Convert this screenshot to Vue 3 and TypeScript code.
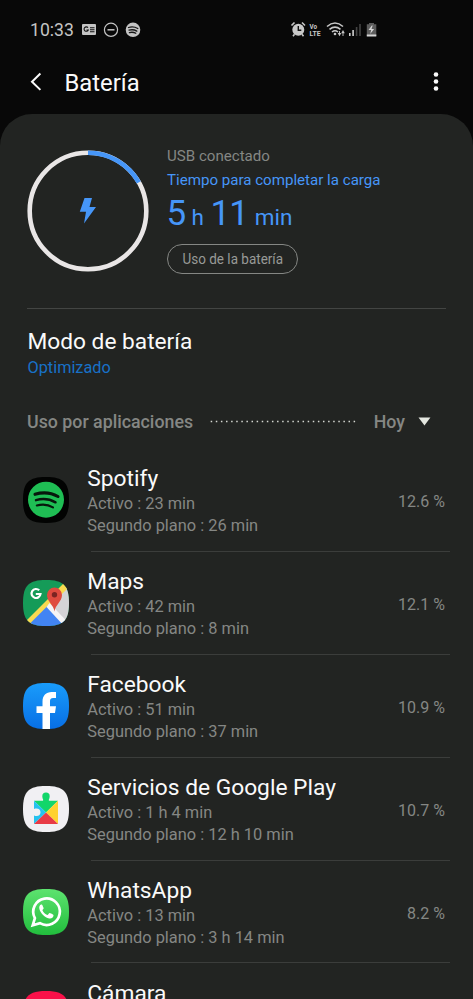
<script setup lang="ts">
interface AppUsage {
  id: string
  name: string
  active: string
  background: string
  percent: string
}

const squircle = 'M23 0C40.500 0 46 5.500 46 23S40.500 46 23 46 0 40.500 0 23 5.500 0 23 0Z'

const apps: AppUsage[] = [
  { id: 'spotify', name: 'Spotify', active: '23 min', background: '26 min', percent: '12.6 %' },
  { id: 'maps', name: 'Maps', active: '42 min', background: '8 min', percent: '12.1 %' },
  { id: 'facebook', name: 'Facebook', active: '51 min', background: '37 min', percent: '10.9 %' },
  { id: 'play', name: 'Servicios de Google Play', active: '1 h 4 min', background: '12 h 10 min', percent: '10.7 %' },
  { id: 'whatsapp', name: 'WhatsApp', active: '13 min', background: '3 h 14 min', percent: '8.2 %' },
  { id: 'camera', name: 'Cámara', active: '', background: '', percent: '' },
]
</script>

<template>
  <div class="screen">
    <header class="status">
      <span class="clock">10:33</span>
      <svg class="notifications" width="60" height="18" viewBox="0 0 60 18">
        <rect x="0" y="4" width="14" height="11" rx="1" fill="#c4c4c4" />
        <path d="M6 7.700A2.200 2.200 0 1 0 6.300 10H4.500M8 7.700h4.500M8 9.700h4.500M8 11.700h4.500" fill="none" stroke="#111" stroke-width="1.100" />
        <circle cx="29" cy="9.800" r="6.600" fill="none" stroke="#c4c4c4" stroke-width="1.200" />
        <path d="M25.500 9.800h7" stroke="#c4c4c4" stroke-width="1.500" />
        <circle cx="51" cy="9.800" r="7.300" fill="#c4c4c4" />
        <path d="M46.500 7.500q5-1.500 9.300 1M47 10.200q4.300-1.200 7.800.9M47.400 12.600q3.600-.9 6.400.7" fill="none" stroke="#161616" stroke-width="1.300" stroke-linecap="round" />
      </svg>
      <svg class="indicators" width="90" height="18" viewBox="0 0 90 18">
        <circle cx="8.300" cy="9.800" r="6" fill="#c8c8c8" />
        <path d="M1.500 5.500l3-3M15 5.500l-3-3M4.500 14.300l-1.500 2M12 14.300l1.500 2" stroke="#c8c8c8" stroke-width="1.600" />
        <path d="M8.300 6v4.200h3" fill="none" stroke="#111" stroke-width="1.400" />
        <text x="19.500" y="8.500" font-size="6.500" textLength="7.500" lengthAdjust="spacingAndGlyphs" class="lte">Vo</text>
        <text x="19.500" y="15.500" font-size="7.500" textLength="11" lengthAdjust="spacingAndGlyphs" class="lte">LTE</text>
        <path d="M37 6.500q8-7 16 0M39.500 9.300q5.500-4.500 11 0M42 12q3-2.500 6 0" fill="none" stroke="#c8c8c8" stroke-width="1.600" />
        <circle cx="45" cy="14" r="1.300" fill="#c8c8c8" />
        <path d="M47.700 13h3.600l-1.800 3.200zM51.200 13.200h3.600L53 10z" fill="#c8c8c8" />
        <path d="M49.500 11v3M53 12v4" stroke="#c8c8c8" stroke-width=".9" />
        <path d="M59 13h1.600v3H59zM62.300 10h1.600v6h-1.600z" fill="#d0d0d0" />
        <path d="M65.800 7h1.600v9h-1.600zM69.200 4h1.600v12h-1.600z" fill="#444" />
        <path d="M79 3h5v1.300h2.300V16h-9.500V4.300H79z" fill="#5c5c5c" />
        <path d="M76.800 14.500h9.500V16.500h-9.500zM81.800 5.500l-3.300 4.500h2.700l-1 4 3.900-5.100h-2.600l1.200-3.400z" fill="#d5d5d5" />
      </svg>
    </header>

    <nav class="toolbar">
      <svg class="back" width="14" height="20" viewBox="0 0 14 20"><path d="M11.400 1.500L3 9.700l8.400 8.200" fill="none" stroke="#fafafa" stroke-width="2" /></svg>
      <h1>Batería</h1>
      <svg class="more" width="6" height="20" viewBox="0 0 6 20" fill="#fafafa"><circle cx="3" cy="2.500" r="2.300" /><circle cx="3" cy="9.500" r="2.300" /><circle cx="3" cy="16.500" r="2.300" /></svg>
    </nav>

    <main class="panel">
      <section class="summary">
        <svg class="gauge" width="122" height="122" viewBox="0 0 122 122">
          <circle cx="61" cy="61" r="58.300" fill="none" stroke="#e9e6e6" stroke-width="4.600" />
          <path d="M61 2.700A58.300 58.300 0 0 1 111.800 32.400" fill="none" stroke="#4696f8" stroke-width="4.600" />
          <path d="M57.500 48h7.500l-2.500 9h6.500L57 73.500l2-11.700h-6.200z" fill="#4696f8" />
        </svg>
        <div class="charge">
          <p class="source">USB conectado</p>
          <p class="caption">Tiempo para completar la carga</p>
          <p class="time"><b>5</b><span class="h">h</span><b class="mins">11</b><span class="m">min</span></p>
          <button class="usage" type="button"><span>Uso de la batería</span></button>
        </div>
      </section>

      <section class="mode">
        <h2>Modo de batería</h2>
        <p>Optimizado</p>
      </section>

      <section class="filter">
        <h3>Uso por aplicaciones</h3>
        <svg class="dots" width="146" height="3" viewBox="0 0 146 3"><path d="M.7 1.500H146" stroke="#d5d8d2" stroke-width="1.500" stroke-dasharray="1.500 3.620" /></svg>
        <span class="period">Hoy</span>
        <svg class="caret" width="13" height="9" viewBox="0 0 13 9"><path d="M.5.5h12L6.500 8.500z" fill="#e3e6df" /></svg>
      </section>

      <ul class="apps">
        <li v-for="app in apps" :key="app.id">
          <svg class="icon" width="46" height="46" viewBox="0 0 46 46">
            <defs>
              <clipPath :id="'clip-' + app.id"><path :d="squircle" /></clipPath>
              <linearGradient :id="'fade-' + app.id" x1="0" y1="0" x2="0" y2="1">
                <stop offset="0" :stop-color="app.id === 'facebook' ? '#199cfb' : '#5de36f'" />
                <stop offset="1" :stop-color="app.id === 'facebook' ? '#086fe5' : '#22bd3d'" />
              </linearGradient>
            </defs>
            <g :clip-path="'url(#clip-' + app.id + ')'">
              <template v-if="app.id === 'spotify'">
                <path d="M0 0h46v46H0z" fill="#020302" />
                <circle cx="23" cy="22.700" r="18" fill="#1fbe54" />
                <g fill="none" stroke="#07180c" stroke-linecap="round">
                  <path d="M12 17.300q12.500-3.700 23 2.200" stroke-width="3.100" />
                  <path d="M13 23.100q10.500-3 19.500 2.200" stroke-width="2.500" />
                  <path d="M13.800 28.500q9-2.400 16.200 1.900" stroke-width="2.100" />
                </g>
              </template>
              <template v-else-if="app.id === 'maps'">
                <path d="M0 0h46v46H0z" fill="#159b58" />
                <path d="M46 4v42L24 24z" fill="#d4d3d6" />
                <path d="M0 44L42 2l5 4L5 48z" fill="#f9d950" />
                <path d="M2.500 48L25 25.500 44 44v4z" fill="#4284f3" />
                <path d="M23.500 27l3-4L45 42.500 41 46z" fill="#f5f4f5" />
                <path d="M31.500 31.500C30.800 25 24 21.500 24 15a7.500 7.500 0 0 1 15 0c0 6.500-6.800 10-7.500 16.500z" fill="#df4b3f" />
                <circle cx="31.500" cy="14.700" r="2.700" fill="#7b2422" />
                <path d="M16.200 10.300A4.500 4.500 0 1 0 17.500 14h-4.700" fill="none" stroke="#fff" stroke-width="2.200" />
              </template>
              <template v-else-if="app.id === 'facebook'">
                <path d="M0 0h46v46H0z" fill="url(#fade-facebook)" />
                <path d="M19.500 46V30h-6v-6.700h6v-4.600C19.500 12.500 23 9 28.700 9H33v6h-2.700c-2.800 0-3.300 1.200-3.300 3.500v4.800h6L32 30h-5v16z" fill="#fff" />
              </template>
              <template v-else-if="app.id === 'play'">
                <path d="M0 0h46v46H0z" fill="#f1f0f3" />
                <path d="M11 14.800h9c.8-1-.7-1.800-.7-4.500a3.700 3.700 0 0 1 7.400 0c0 2.700-1.500 3.500-.7 4.500h9L23 26.500z" fill="#12d66a" />
                <path d="M11 14.800L23 26.500 11 38v-8.500c4 1.500 6.500-.5 6.500-3.200S15 21.600 11 23z" fill="#25c2ef" />
                <path d="M35 14.800V38L23 26.500z" fill="#ffd22f" />
                <path d="M11 38l12-11.500L35 38z" fill="#e83b46" />
              </template>
              <template v-else-if="app.id === 'whatsapp'">
                <path d="M0 0h46v46H0z" fill="url(#fade-whatsapp)" />
                <path d="M9.700 36.300l2.200-7.200a13.300 13.300 0 1 1 5 5.100z" fill="none" stroke="#fff" stroke-width="2.700" />
                <path d="M18.100 15.500c-1.200.5-2.300 2.200-1.700 4.400 1.300 4.500 5.300 8.300 9.800 9.500 2.300.5 4-1 4.300-2.700.1-1-.4-1.300-3.600-2.600-.9-.3-1.300 1.600-2.300 1.800-1.500-.3-4.300-2.500-5.100-4.500-.2-.8 1.400-1.400 1.100-2.300-1.200-3.300-1.400-3.600-2.500-3.600z" fill="#fff" />
              </template>
              <path v-else d="M0 0h46v46H0z" fill="#fa1149" />
            </g>
          </svg>
          <div class="details">
            <h4>{{ app.name }}</h4>
            <template v-if="app.active">
              <p>Activo : {{ app.active }}</p>
              <p>Segundo plano : {{ app.background }}</p>
            </template>
          </div>
          <span class="percent">{{ app.percent }}</span>
        </li>
      </ul>
    </main>
  </div>
</template>

<style>
body { background: #080808; overflow: hidden; }
</style>

<style scoped>
* { box-sizing: border-box; margin: 0; padding: 0; font-weight: 400; }
.screen { width: 473px; height: 999px; overflow: hidden; display: flex; flex-direction: column; background: #080808; color: #fafafa; font-family: Roboto, sans-serif; }
.status { height: 53px; flex: none; display: flex; align-items: flex-start; padding: 20px 93px 0 30px; }
.clock { width: 52px; font-size: 17.600px; line-height: 20px; color: #c4c4c4; white-space: nowrap; }
.indicators { margin-left: auto; }
.lte { font-weight: 700; fill: #c8c8c8; }
.toolbar { height: 61px; flex: none; display: flex; align-items: flex-start; padding: 19px 34px 0 29px; }
.toolbar h1 { margin: -1px 0 0 21.500px; font-size: 23.800px; line-height: 24px; }
.more { margin-left: auto; }
.panel { flex: none; height: 885px; overflow: hidden; background: #222422; border-radius: 32px 32px 0 0; }
.summary { height: 195px; margin: 0 27px; padding-top: 36px; display: flex; gap: 18px; border-bottom: 1px solid #434543; }
.charge { display: flex; flex-direction: column; align-items: flex-start; white-space: nowrap; }
.source { margin-top: -1px; font-size: 15.1px; line-height: 14px; color: #858784; }
.caption { margin-top: 7px; font-size: 15.1px; line-height: 20px; color: #4696f8; }
.time { margin-top: 6px; height: 36px; display: flex; align-items: baseline; line-height: 36px; font-size: 22.5px; color: #4696f8; }
.time b { margin-left: -.5px; font-size: 35px; letter-spacing: -.7px; }
.h { margin-left: 6px; }
.time .mins { margin-left: 6.500px; }
.m { margin-left: 6.500px; }
.usage { width: 131px; height: 30px; margin-top: 12px; border: 1.5px solid #858784; border-radius: 15px; background: none; color: #989a97; font: 15.5px/26px Roboto, sans-serif; display: flex; justify-content: center; align-items: center; }
.usage span { display: block; transform: scaleX(.87); }
.mode { padding: 19px 27.500px 0; height: 86px; }
.mode h2 { font-size: 22.700px; line-height: 28px; }
.mode p { font-size: 16.300px; line-height: 24px; color: #1871c7; }
.filter { height: 42px; margin-bottom: 12px; padding: 11px 42px 0 27px; display: flex; align-items: center; color: #858784; font-size: 17.800px; }
.filter h3 { width: 184px; font-size: 17.800px; font-weight: 500; white-space: nowrap; }
.period { margin-left: 17.700px; width: 44.500px; font-weight: 500; }
.apps { list-style: none; }
.apps li { position: relative; height: 102.9px; padding: 0 28px 0 23px; display: flex; }
.apps li::after { content: ""; position: absolute; left: 91px; right: 23px; bottom: 0; height: 1px; background: #3b3d3b; }
.icon { flex: none; margin-top: 28px; }
.details { margin-left: 18.300px; padding-top: 17.400px; white-space: nowrap; color: #858784; }
.details h4 { font-size: 22.750px; line-height: 26px; color: #fafafa; }
.details p { position: relative; top: .8px; font-size: 16.4px; line-height: 22px; }
.percent { margin-left: auto; padding-top: 42.300px; font-size: 16px; line-height: 22px; color: #858784; white-space: nowrap; }
</style>
